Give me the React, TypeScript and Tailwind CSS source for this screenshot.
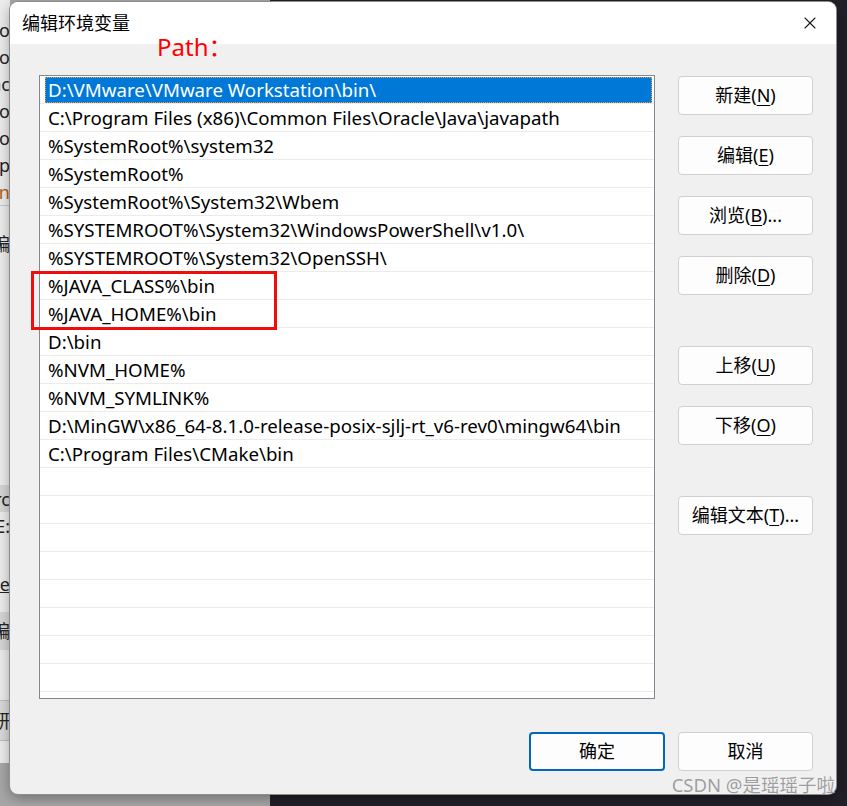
import { X } from 'lucide-react';

const paths = [
  'D:\\VMware\\VMware Workstation\\bin\\',
  'C:\\Program Files (x86)\\Common Files\\Oracle\\Java\\javapath',
  '%SystemRoot%\\system32',
  '%SystemRoot%',
  '%SystemRoot%\\System32\\Wbem',
  '%SYSTEMROOT%\\System32\\WindowsPowerShell\\v1.0\\',
  '%SYSTEMROOT%\\System32\\OpenSSH\\',
  '%JAVA_CLASS%\\bin',
  '%JAVA_HOME%\\bin',
  'D:\\bin',
  '%NVM_HOME%',
  '%NVM_SYMLINK%',
  'D:\\MinGW\\x86_64-8.1.0-release-posix-sjlj-rt_v6-rev0\\mingw64\\bin',
  'C:\\Program Files\\CMake\\bin',
];

const rows = [...paths, ...Array(8).fill('')];

// bits of the window behind the dialog, only the last letters peek out
const behind = [
  { h: 16, text: '' },
  { h: 27, text: 'io' },
  { h: 27, text: 'o' },
  { h: 27, text: 'nc' },
  { h: 27, text: 'o' },
  { h: 27, text: 'o' },
  { h: 27, text: 'p' },
  { h: 27, text: 'on', cls: 'text-[#b0601a]' },
  { h: 25, text: '', cls: 'border-t border-[#c8c8c8]' },
  { h: 28, text: '编' },
  { h: 227, text: '' },
  { h: 27, text: 'rc', cls: 'bg-[#d6d6d6]' },
  { h: 28, text: 'E:' },
  { h: 30, text: '' },
  { h: 28, text: 'ie', cls: 'underline' },
  { h: 14, text: '' },
  { h: 38, text: '编', cls: 'bg-[#d6d6d6]' },
  { h: 50, text: '' },
  { h: 40, text: '研', cls: 'bg-[#d9d9d9] border-t border-[#bdbdbd]' },
  { h: 23, text: '', cls: 'border-t border-[#bdbdbd]' },
];

type BtnProps = { label: string; keyChar: string; tail?: string };

function Btn({ label, keyChar, tail = '' }: BtnProps) {
  return (
    <button className="h-[39px] w-[135px] rounded-[4px] border border-[#d0d0d0] bg-[#fdfdfd] text-[18px] text-black">
      {label}(<span className="underline underline-offset-[3px]">{keyChar}</span>){tail}
    </button>
  );
}

export default function App() {
  return (
    <div className="relative h-[806px] w-[847px] overflow-hidden bg-[#211f28] font-['Noto_Sans','Noto_Sans_CJK_SC',sans-serif]">
      {/* window behind */}
      <div className="absolute left-0 top-0 flex h-[806px] w-[270px] flex-col bg-[#a7a7a7]">
        <div className="flex w-[10px] flex-col overflow-hidden bg-[#ececec] text-[18px] text-[#222]">
          {behind.map((b, i) => (
            <div
              key={i}
              className={`flex items-center justify-end whitespace-nowrap leading-none ${b.cls ?? ''}`}
              style={{ height: b.h }}
            >
              {b.text}
            </div>
          ))}
        </div>
      </div>

      {/* dialog */}
      <div className="absolute left-[10px] top-[2px] flex h-[792px] w-[826px] flex-col overflow-hidden rounded-[8px] bg-[#f0f0f0] shadow-[0_0_0_1px_#8d8d8d,0_4px_14px_rgba(0,0,0,0.35)]">
        <div className="flex h-[42px] shrink-0 items-center justify-between bg-white pl-[12px] pr-[16px]">
          <span className="text-[18px] text-black">编辑环境变量</span>
          <X className="h-[20px] w-[20px] text-[#1a1a1a]" strokeWidth={1.3} />
        </div>

        <div className="relative flex flex-col px-[23px] pl-[29px] pt-[31px]">
          <span className="absolute left-[147px] top-[-15px] text-[24px] leading-[36px] text-[#ff0000]">Path：</span>

          <div className="flex gap-[23px]">
            <div className="relative flex h-[624px] w-[617px] flex-col border border-[#828790] bg-white">
              {rows.map((p, i) => (
                <div key={i} className="h-[28px] shrink-0 border-b border-[#ebebeb] px-[1px]">
                  {i === 0 ? (
                    <div className="ml-[4px] mr-[1px] mt-[1px] flex h-[26px] items-center border border-dotted border-[#f0a040] bg-[#0078d7] pl-[2px] pt-[1px] text-[18.7px] text-white">
                      {p}
                    </div>
                  ) : (
                    <div className="flex h-[27px] items-center pl-[7px] pt-[1px] text-[18.7px] text-black">{p}</div>
                  )}
                </div>
              ))}
              <div className="absolute left-[-9px] top-[195px] h-[59px] w-[246px] border-[3px] border-[#f20d0d]" />
            </div>

            <div className="flex w-[135px] flex-col pt-[1px]">
              <Btn label="新建" keyChar="N" />
              <div className="mt-[21px]"><Btn label="编辑" keyChar="E" /></div>
              <div className="mt-[21px]"><Btn label="浏览" keyChar="B" tail="..." /></div>
              <div className="mt-[21px]"><Btn label="删除" keyChar="D" /></div>
              <div className="mt-[51px]"><Btn label="上移" keyChar="U" /></div>
              <div className="mt-[21px]"><Btn label="下移" keyChar="O" /></div>
              <div className="mt-[51px]"><Btn label="编辑文本" keyChar="T" tail="..." /></div>
            </div>
          </div>

          <div className="mt-[33px] flex justify-end gap-[13px]">
            <button className="h-[39px] w-[136px] rounded-[4px] border-2 border-[#0067c0] bg-[#fdfdfd] text-[18px] text-black">
              确定
            </button>
            <button className="h-[39px] w-[135px] rounded-[4px] border border-[#d0d0d0] bg-[#fdfdfd] text-[18px] text-black">
              取消
            </button>
          </div>
        </div>
      </div>

      {/* watermark */}
      <div className="absolute right-[12px] top-[771px] text-[18.5px] text-[#9d9d9d] [text-shadow:0_0_1px_#fff]">
        CSDN @是瑶瑶子啦
      </div>
    </div>
  );
}
